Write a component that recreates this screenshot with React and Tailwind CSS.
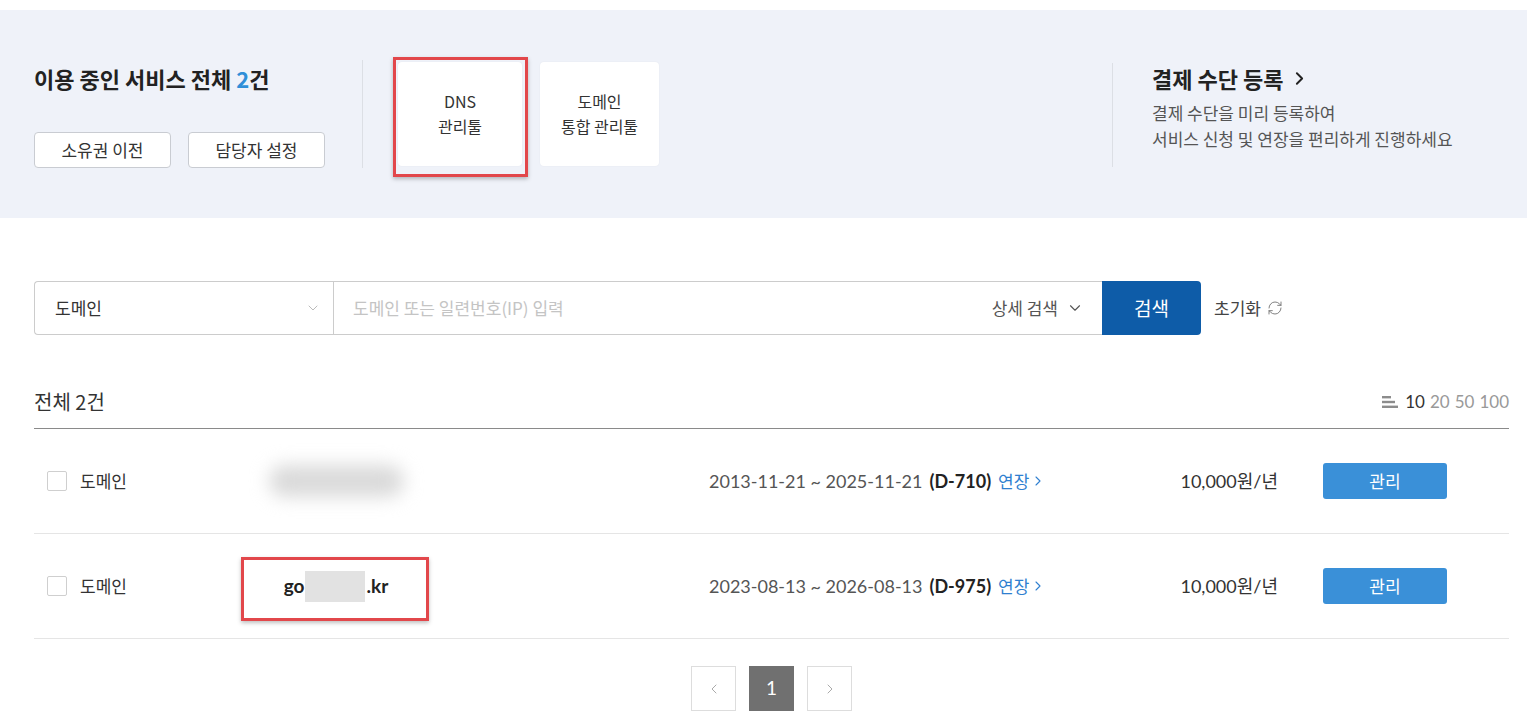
import React from "react";
import { ChevronDown, ChevronRight, ChevronLeft, RefreshCw } from "lucide-react";

const FONT = { fontFamily: "Lato, 'Noto Sans CJK KR', sans-serif" };
const KR = { fontFamily: "'Noto Sans CJK KR', sans-serif" };

function ToolBox({ lines, highlighted }) {
  return (
    <div className="relative">
      <div className="w-full h-[104px] bg-white rounded-[4px] shadow-[0_0_2px_rgba(0,0,0,0.06)] flex flex-col items-center justify-center text-[16px] leading-[25px] text-[#333]" style={KR}>
        {lines.map((l) => (
          <span key={l}>{l}</span>
        ))}
      </div>
      {highlighted && (
        <div className="absolute -left-[5px] -top-[5px] -right-[6px] -bottom-[11px] border-[3px] border-[#e2474b] shadow-[0_2px_4px_rgba(0,0,0,0.25)]"></div>
      )}
    </div>
  );
}

function Row({ domain, date, dday }) {
  return (
    <div className="h-[105px] border-b border-[#e5e5e5] flex items-center">
      <div className="w-[180px] pl-[13px] flex items-center gap-[13px]">
        <span className="w-[20px] h-[20px] border border-[#cfcfcf] rounded-[2px] bg-white"></span>
        <span className="text-[17px] text-[#333]" style={KR}>도메인</span>
      </div>
      <div className="w-[244px] flex justify-center">{domain}</div>
      <div className="ml-[251px] w-[440px] flex items-center text-[18px] text-[#555]">
        <span>{date}</span>
        <span className="ml-[7px] font-bold text-[#222]">({dday})</span>
        <span className="ml-[7px] text-[#2f7fd0] flex items-center text-[17px]" style={KR}>
          연장
          <ChevronRight size={16} strokeWidth={1.6} className="ml-[1px]" />
        </span>
      </div>
      <div className="w-[129px] text-right text-[18px] text-[#333]">10,000원/년</div>
      <button className="ml-[45px] w-[124px] h-[36px] bg-[#3a90d8] rounded-[3px] text-white text-[17px]" style={KR}>
        관리
      </button>
    </div>
  );
}

export default function App() {
  return (
    <div className="w-[1527px] h-[724px] bg-white overflow-hidden" style={FONT}>
      {/* summary band */}
      <div className="mt-[10px] h-[208px] bg-[#eff2f9] flex items-start pt-[50px]">
        <div className="w-[363px] h-[108px] pl-[34px] border-r border-[#dcdfe5] flex flex-col">
          <div className="mt-[4px] h-[28px] flex items-center text-[22px] font-bold text-[#222]" style={KR}>
            이용 중인 서비스 전체&nbsp;<span className="text-[#2f8fd8]">2</span>건
          </div>
          <div className="mt-[40px] flex gap-[17px]">
            <button className="w-[137px] h-[36px] bg-white border border-[#c9ccd2] rounded-[4px] text-[17px] text-[#333]" style={KR}>
              소유권 이전
            </button>
            <button className="w-[137px] h-[36px] bg-white border border-[#c9ccd2] rounded-[4px] text-[17px] text-[#333]" style={KR}>
              담당자 설정
            </button>
          </div>
        </div>
        <div className="ml-[35px] mt-[2px] w-[124px]">
          <ToolBox lines={["DNS", "관리툴"]} highlighted />
        </div>
        <div className="ml-[18px] mt-[2px] w-[119px]">
          <ToolBox lines={["도메인", "통합 관리툴"]} />
        </div>
        <div className="flex-1"></div>
        <div className="w-[415px] h-[104px] mt-[3px] border-l border-[#dcdfe5] pl-[39px]">
          <div className="h-[28px] mt-[1px] flex items-center text-[22px] font-bold text-[#222]" style={KR}>
            결제 수단 등록
            <ChevronRight size={21} strokeWidth={2.2} className="ml-[6px]" />
          </div>
          <div className="mt-[8px] text-[17px] leading-[26px] text-[#555]" style={KR}>
            <div>결제 수단을 미리 등록하여</div>
            <div>서비스 신청 및 연장을 편리하게 진행하세요</div>
          </div>
        </div>
      </div>

      <div className="pl-[34px] pr-[18px]">
        {/* search bar */}
        <div className="mt-[63px] flex items-center">
          <div className="flex-none w-[1068px] h-[54px] border border-[#cccccc] border-r-0 rounded-l-[4px] flex">
            <div className="w-[299px] border-r border-[#cccccc] flex items-center justify-between pl-[20px] pr-[12px]">
              <span className="text-[17px] text-[#333]" style={KR}>도메인</span>
              <ChevronDown size={16} strokeWidth={1} className="text-[#999]" />
            </div>
            <div className="flex-1 flex items-center pl-[19px] pr-[18px]">
              <span className="flex-1 text-[17px] text-[#c4c4c4]" style={KR}>도메인 또는 일련번호(IP) 입력</span>
              <span className="text-[17px] text-[#555] flex items-center" style={KR}>
                상세 검색
                <ChevronDown size={18} strokeWidth={1.5} className="ml-[8px] text-[#555]" />
              </span>
            </div>
          </div>
          <button className="w-[99px] h-[54px] bg-[#0e5ca8] rounded-r-[4px] text-white text-[19px]" style={KR}>
            검색
          </button>
          <div className="ml-[13px] flex items-center text-[17px] text-[#444]" style={KR}>
            초기화
            <RefreshCw size={16} strokeWidth={1.4} className="ml-[6px] text-[#777]" />
          </div>
        </div>

        {/* list header */}
        <div className="mt-[40px] h-[54px] border-b border-[#8a8a8a] flex items-center justify-between">
          <span className="text-[20px] text-[#333]" style={KR}>전체 2건</span>
          <div className="flex items-center text-[17px] text-[#999]">
            <svg width="16" height="14" viewBox="0 0 16 14" className="mr-[7px]">
              <rect x="0" y="1" width="9" height="2.4" fill="#8c8c8c" />
              <rect x="0" y="5.8" width="13" height="2.4" fill="#8c8c8c" />
              <rect x="0" y="10.6" width="16" height="2.4" fill="#8c8c8c" />
            </svg>
            <span className="text-[#333]">10</span>
            <span className="ml-[5px]">20</span>
            <span className="ml-[5px]">50</span>
            <span className="ml-[5px]">100</span>
          </div>
        </div>

        <Row
          date="2013-11-21 ~ 2025-11-21"
          dday="D-710"
          domain={<div className="w-[135px] h-[32px] rounded-full bg-[#dadada] blur-[9px]"></div>}
        />
        <Row
          date="2023-08-13 ~ 2026-08-13"
          dday="D-975"
          domain={
            <div className="relative flex items-center text-[19px] font-bold text-[#222]">
              <span>go</span>
              <span className="w-[60px] h-[31px] bg-[#e2e2e2]"></span>
              <span className="ml-[2px]">.kr</span>
              <div className="absolute -left-[43px] -right-[41px] -top-[14px] -bottom-[19px] border-[3px] border-[#e2474b] shadow-[0_2px_4px_rgba(0,0,0,0.25)]"></div>
            </div>
          }
        />

        {/* pagination */}
        <div className="mt-[27px] flex justify-center gap-[13px]">
          <div className="w-[45px] h-[45px] border border-[#dddddd] flex items-center justify-center">
            <ChevronLeft size={16} strokeWidth={1.5} className="text-[#aaa]" />
          </div>
          <div className="w-[45px] h-[45px] bg-[#707070] flex items-center justify-center text-white text-[19px]">1</div>
          <div className="w-[45px] h-[45px] border border-[#dddddd] flex items-center justify-center">
            <ChevronRight size={16} strokeWidth={1.5} className="text-[#aaa]" />
          </div>
        </div>
      </div>
    </div>
  );
}
